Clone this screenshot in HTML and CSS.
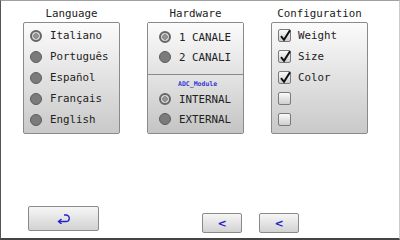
FILE: index.html
```html
<!DOCTYPE html>
<html lang="en">
<head>
    <meta charset="UTF-8">
    <title>Settings</title>
    <link rel="stylesheet" href="styles.css">
</head>
<body>
    <div class="screen">
        <div class="columns">
            <div class="column">
                <div class="title">Language</div>
                <div class="panel lang">
                    <div class="row"><span class="radio on"></span>Italiano</div>
                    <div class="row"><span class="radio"></span>Português</div>
                    <div class="row"><span class="radio"></span>Español</div>
                    <div class="row"><span class="radio"></span>Français</div>
                    <div class="row"><span class="radio"></span>English</div>
                </div>
            </div>
            <div class="column">
                <div class="title">Hardware</div>
                <div class="panel hw">
                    <div class="hw-top">
                        <div class="row"><span class="radio on"></span>1 CANALE</div>
                        <div class="row"><span class="radio"></span>2 CANALI</div>
                    </div>
                    <div class="hw-bottom">
                        <div class="module">ADC_Module</div>
                        <div class="row"><span class="radio on"></span>INTERNAL</div>
                        <div class="row"><span class="radio"></span>EXTERNAL</div>
                    </div>
                </div>
            </div>
            <div class="column">
                <div class="title">Configuration</div>
                <div class="panel conf">
                    <div class="row"><span class="check on"><svg width="14" height="14" viewBox="0 0 14 14"><path d="M3 7.2 L6 10.8 L12 1.2" fill="none" stroke="#111" stroke-width="2"/></svg></span>Weight</div>
                    <div class="row"><span class="check on"><svg width="14" height="14" viewBox="0 0 14 14"><path d="M3 7.2 L6 10.8 L12 1.2" fill="none" stroke="#111" stroke-width="2"/></svg></span>Size</div>
                    <div class="row"><span class="check on"><svg width="14" height="14" viewBox="0 0 14 14"><path d="M3 7.2 L6 10.8 L12 1.2" fill="none" stroke="#111" stroke-width="2"/></svg></span>Color</div>
                    <div class="row"><span class="check"></span></div>
                    <div class="row"><span class="check"></span></div>
                </div>
            </div>
        </div>
        <div class="footer">
            <button class="btn back">
                <svg width="13" height="10" viewBox="0 0 13 10"><path d="M7 1 H9 A3 3 0 0 1 9 7.5 H2" fill="none" stroke="#2222cc" stroke-width="1.4"/><path d="M4.5 5 L1.5 7.5 L4.5 10" fill="none" stroke="#2222cc" stroke-width="1.4"/></svg>
            </button>
            <button class="btn small first">&lt;</button>
            <button class="btn small">&lt;</button>
        </div>
    </div>
</body>
</html>
```
FILE: styles.css
```css
body {
    margin: 0;
    font-family: "DejaVu Sans Mono", monospace;
    color: #222;
    background: #fff;
}
.screen {
    box-sizing: border-box;
    width: 400px;
    height: 240px;
    border-top: 1px solid #a0a0a0;
    border-left: 1px solid #555;
    border-right: 1px solid #ccc;
    border-bottom: 2px solid #444;
    padding: 5px 0 0 22px;
}
.columns {
    display: flex;
    gap: 27px;
}
.column {
    width: 97px;
}
.title {
    font-size: 10.8px;
    line-height: 16px;
    text-align: center;
}
.panel {
    box-sizing: border-box;
    height: 112px;
    border: 1px solid #8a8a8a;
    border-radius: 2px;
    background: linear-gradient(#fbfbfb, #c9c9c9);
    font-size: 10.8px;
}
.lang, .conf {
    padding: 2px 0 0 6px;
}
.row {
    display: flex;
    align-items: center;
    height: 21px;
}
.radio {
    box-sizing: border-box;
    width: 12px;
    height: 12px;
    border-radius: 50%;
    border: 1px solid #5c5c5c;
    background: #7b7b7b;
    margin-right: 8px;
}
.radio.on {
    border: 2px solid #666;
    background: radial-gradient(circle, #9a9a9a 0, #888 2.5px, #d4d4d4 3px, #d4d4d4 4px);
}
.hw {
    display: flex;
    flex-direction: column;
    background: none;
}
.hw-top {
    height: 52px;
    padding: 4px 0 0 11px;
    box-sizing: border-box;
    background: linear-gradient(#fbfbfb, #e2e2e2);
    border-bottom: 1px solid #8a8a8a;
}
.hw-top .row, .hw-bottom .row {
    height: 20px;
}
.hw-bottom {
    flex: 1;
    padding: 4px 0 0 11px;
    background: linear-gradient(#e4e4e4, #c4c4c4);
}
.module {
    font-size: 6.5px;
    line-height: 10px;
    font-weight: bold;
    color: #3a3ad0;
    padding-left: 19px;
}
.check {
    box-sizing: border-box;
    width: 13px;
    height: 13px;
    border: 1px solid #7a7a7a;
    border-radius: 2px;
    background: linear-gradient(#fafafa, #cfcfcf);
    margin-right: 7px;
    position: relative;
}
.check svg {
    position: absolute;
    left: -1px;
    top: -1px;
}
.footer {
    display: flex;
    align-items: flex-start;
    margin-top: 72px;
    padding-left: 5px;
}
.btn {
    box-sizing: border-box;
    border: 1px solid #8a8a8a;
    border-radius: 2px;
    background: linear-gradient(#f6f6f6, #d2d2d2);
    padding: 0;
    display: flex;
    align-items: center;
    justify-content: center;
    color: #2222cc;
    font-family: "DejaVu Sans", sans-serif;
    font-weight: bold;
    font-size: 11px;
}
.back {
    width: 71px;
    height: 25px;
}
.small {
    width: 40px;
    height: 20px;
    margin-top: 7px;
    margin-left: 17px;
}
.small.first {
    margin-left: 103px;
}
```
